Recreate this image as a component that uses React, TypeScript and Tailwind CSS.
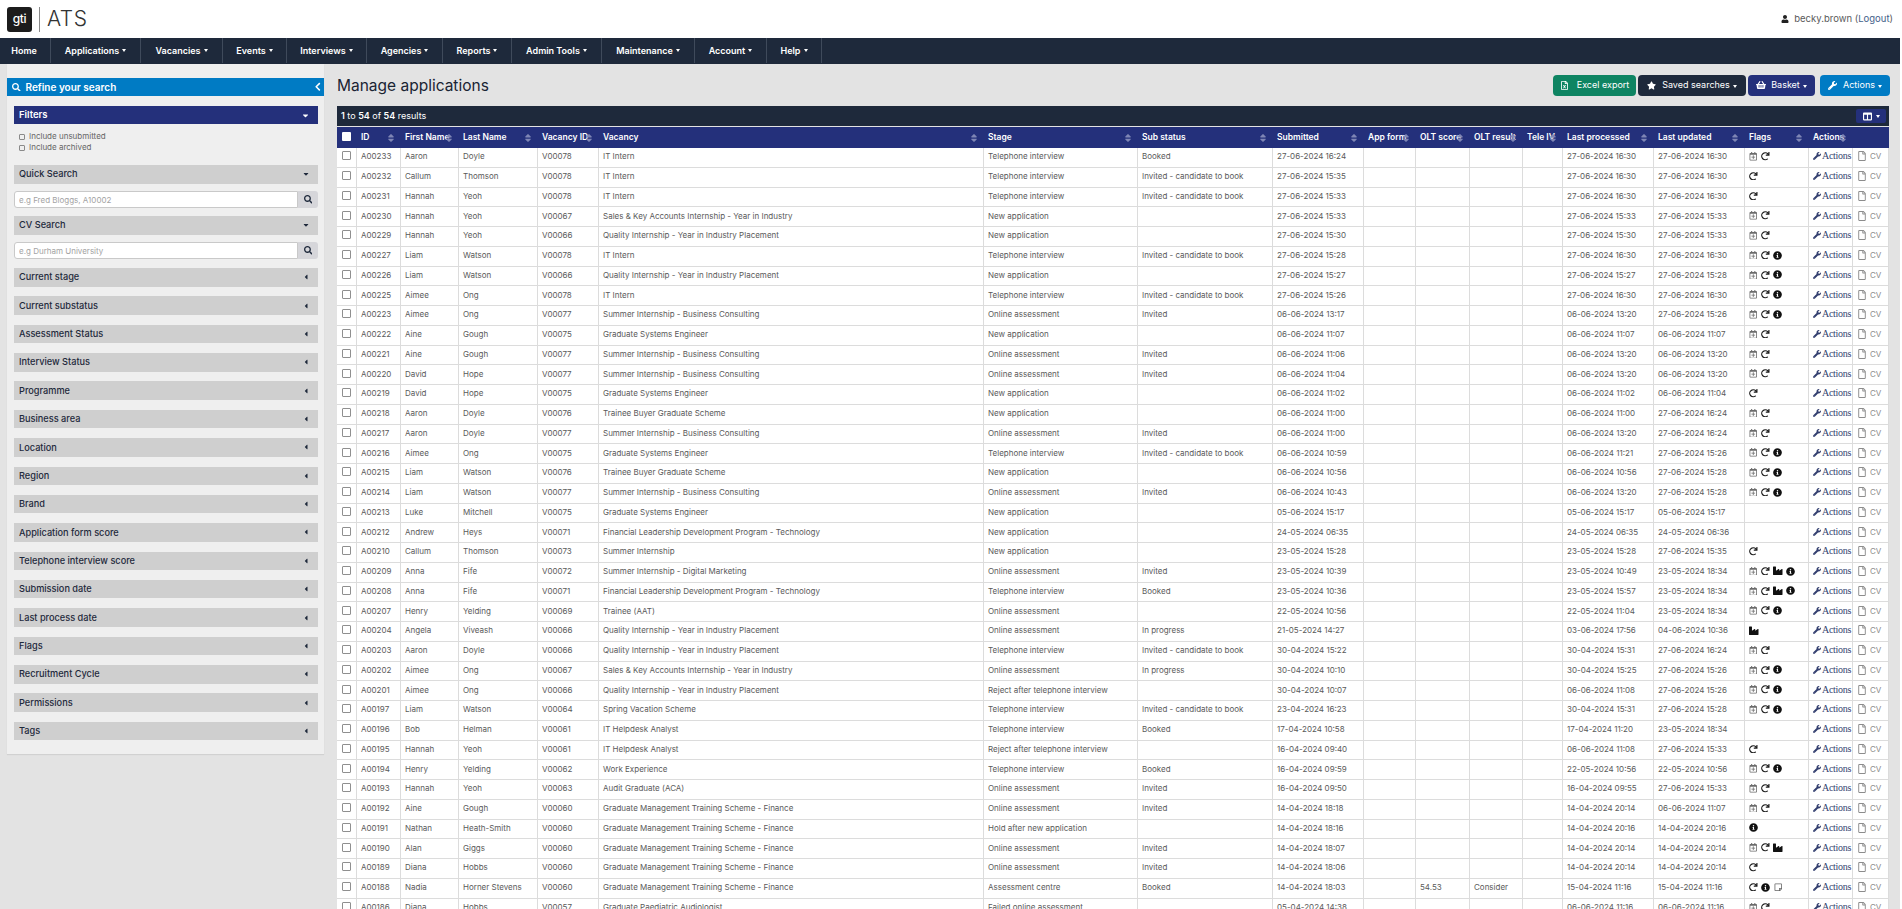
import {
  FaCaretDown,
  FaCaretLeft,
  FaChevronLeft,
  FaColumns,
  FaIndustry,
  FaInfoCircle,
  FaRedo,
  FaRegCalendarPlus,
  FaRegFile,
  FaRegFileExcel,
  FaRegStickyNote,
  FaSearch,
  FaShoppingBasket,
  FaSort,
  FaStar,
  FaUser,
  FaWrench,
} from "react-icons/fa";

const nav = [
  { label: "Home", caret: false, w: "w-[51px] pr-[2px]" },
  { label: "Applications", caret: true, w: "w-[90px]" },
  { label: "Vacancies", caret: true, w: "w-[82px]" },
  { label: "Events", caret: true, w: "w-[64px]" },
  { label: "Interviews", caret: true, w: "w-[80px]" },
  { label: "Agencies", caret: true, w: "w-[76px]" },
  { label: "Reports", caret: true, w: "w-[69px]" },
  { label: "Admin Tools", caret: true, w: "w-[90px]" },
  { label: "Maintenance", caret: true, w: "w-[93px]" },
  { label: "Account", caret: true, w: "w-[72px]" },
  { label: "Help", caret: true, w: "w-[55px]" },
];

const filters = [
  "Current stage",
  "Current substatus",
  "Assessment Status",
  "Interview Status",
  "Programme",
  "Business area",
  "Location",
  "Region",
  "Brand",
  "Application form score",
  "Telephone interview score",
  "Submission date",
  "Last process date",
  "Flags",
  "Recruitment Cycle",
  "Permissions",
  "Tags",
];

const columns = [
  { label: "", w: "w-[20px]", sort: false },
  { label: "ID", w: "w-[44px]", sort: true },
  { label: "First Name", w: "w-[58px]", sort: true },
  { label: "Last Name", w: "w-[79px]", sort: true },
  { label: "Vacancy ID", w: "w-[61px]", sort: true },
  { label: "Vacancy", w: "w-[385px]", sort: true },
  { label: "Stage", w: "w-[154px]", sort: true },
  { label: "Sub status", w: "w-[135px]", sort: true },
  { label: "Submitted", w: "w-[91px]", sort: true },
  { label: "App form", w: "w-[52px]", sort: true },
  { label: "OLT score", w: "w-[54px]", sort: true },
  { label: "OLT result", w: "w-[53px]", sort: true },
  { label: "Tele IV", w: "w-[40px]", sort: true },
  { label: "Last processed", w: "w-[91px]", sort: true },
  { label: "Last updated", w: "w-[91px]", sort: true },
  { label: "Flags", w: "w-[64px]", sort: true },
  { label: "Actions", w: "w-[44px]", sort: true },
  { label: "", w: "w-[36px]", sort: false },
];

const TEL = "Telephone interview";
const NEW = "New application";
const OLA = "Online assessment";
const REJ = "Reject after telephone interview";
const INV = "Invited - candidate to book";
const QUAL = "Quality Internship - Year in Industry Placement";
const SALES = "Sales & Key Accounts Internship - Year in Industry";
const SUMMER = "Summer Internship - Business Consulting";
const GSE = "Graduate Systems Engineer";
const BUYER = "Trainee Buyer Graduate Scheme";
const FIN = "Financial Leadership Development Program - Technology";
const GMT = "Graduate Management Training Scheme - Finance";
const HELP = "IT Helpdesk Analyst";

// id, first, last, vacancy id, vacancy, stage, sub status, submitted, processed, updated, flags
const rows: string[][] = [
  ["A00233", "Aaron", "Doyle", "V00078", "IT Intern", TEL, "Booked", "27-06-2024 16:24", "27-06-2024 16:30", "27-06-2024 16:30", "CR"],
  ["A00232", "Callum", "Thomson", "V00078", "IT Intern", TEL, INV, "27-06-2024 15:35", "27-06-2024 16:30", "27-06-2024 16:30", "R"],
  ["A00231", "Hannah", "Yeoh", "V00078", "IT Intern", TEL, INV, "27-06-2024 15:33", "27-06-2024 16:30", "27-06-2024 16:30", "R"],
  ["A00230", "Hannah", "Yeoh", "V00067", SALES, NEW, "", "27-06-2024 15:33", "27-06-2024 15:33", "27-06-2024 15:33", "CR"],
  ["A00229", "Hannah", "Yeoh", "V00066", QUAL, NEW, "", "27-06-2024 15:30", "27-06-2024 15:30", "27-06-2024 15:33", "CR"],
  ["A00227", "Liam", "Watson", "V00078", "IT Intern", TEL, INV, "27-06-2024 15:28", "27-06-2024 16:30", "27-06-2024 16:30", "CRI"],
  ["A00226", "Liam", "Watson", "V00066", QUAL, NEW, "", "27-06-2024 15:27", "27-06-2024 15:27", "27-06-2024 15:28", "CRI"],
  ["A00225", "Aimee", "Ong", "V00078", "IT Intern", TEL, INV, "27-06-2024 15:26", "27-06-2024 16:30", "27-06-2024 16:30", "CRI"],
  ["A00223", "Aimee", "Ong", "V00077", SUMMER, OLA, "Invited", "06-06-2024 13:17", "06-06-2024 13:20", "27-06-2024 15:26", "CRI"],
  ["A00222", "Aine", "Gough", "V00075", GSE, NEW, "", "06-06-2024 11:07", "06-06-2024 11:07", "06-06-2024 11:07", "CR"],
  ["A00221", "Aine", "Gough", "V00077", SUMMER, OLA, "Invited", "06-06-2024 11:06", "06-06-2024 13:20", "06-06-2024 13:20", "CR"],
  ["A00220", "David", "Hope", "V00077", SUMMER, OLA, "Invited", "06-06-2024 11:04", "06-06-2024 13:20", "06-06-2024 13:20", "CR"],
  ["A00219", "David", "Hope", "V00075", GSE, NEW, "", "06-06-2024 11:02", "06-06-2024 11:02", "06-06-2024 11:04", "R"],
  ["A00218", "Aaron", "Doyle", "V00076", BUYER, NEW, "", "06-06-2024 11:00", "06-06-2024 11:00", "27-06-2024 16:24", "CR"],
  ["A00217", "Aaron", "Doyle", "V00077", SUMMER, OLA, "Invited", "06-06-2024 11:00", "06-06-2024 13:20", "27-06-2024 16:24", "CR"],
  ["A00216", "Aimee", "Ong", "V00075", GSE, TEL, INV, "06-06-2024 10:59", "06-06-2024 11:21", "27-06-2024 15:26", "CRI"],
  ["A00215", "Liam", "Watson", "V00076", BUYER, NEW, "", "06-06-2024 10:56", "06-06-2024 10:56", "27-06-2024 15:28", "CRI"],
  ["A00214", "Liam", "Watson", "V00077", SUMMER, OLA, "Invited", "06-06-2024 10:43", "06-06-2024 13:20", "27-06-2024 15:28", "CRI"],
  ["A00213", "Luke", "Mitchell", "V00075", GSE, NEW, "", "05-06-2024 15:17", "05-06-2024 15:17", "05-06-2024 15:17", ""],
  ["A00212", "Andrew", "Heys", "V00071", FIN, NEW, "", "24-05-2024 06:35", "24-05-2024 06:35", "24-05-2024 06:36", ""],
  ["A00210", "Callum", "Thomson", "V00073", "Summer Internship", NEW, "", "23-05-2024 15:28", "23-05-2024 15:28", "27-06-2024 15:35", "R"],
  ["A00209", "Anna", "Fife", "V00072", "Summer Internship - Digital Marketing", OLA, "Invited", "23-05-2024 10:39", "23-05-2024 10:49", "23-05-2024 18:34", "CRBI"],
  ["A00208", "Anna", "Fife", "V00071", FIN, TEL, "Booked", "23-05-2024 10:36", "23-05-2024 15:57", "23-05-2024 18:34", "CRBI"],
  ["A00207", "Henry", "Yelding", "V00069", "Trainee (AAT)", OLA, "", "22-05-2024 10:56", "22-05-2024 11:04", "23-05-2024 18:34", "CRI"],
  ["A00204", "Angela", "Viveash", "V00066", QUAL, OLA, "In progress", "21-05-2024 14:27", "03-06-2024 17:56", "04-06-2024 10:36", "B"],
  ["A00203", "Aaron", "Doyle", "V00066", QUAL, TEL, INV, "30-04-2024 15:22", "30-04-2024 15:31", "27-06-2024 16:24", "CR"],
  ["A00202", "Aimee", "Ong", "V00067", SALES, OLA, "In progress", "30-04-2024 10:10", "30-04-2024 15:25", "27-06-2024 15:26", "CRI"],
  ["A00201", "Aimee", "Ong", "V00066", QUAL, REJ, "", "30-04-2024 10:07", "06-06-2024 11:08", "27-06-2024 15:26", "CRI"],
  ["A00197", "Liam", "Watson", "V00064", "Spring Vacation Scheme", TEL, INV, "23-04-2024 16:23", "30-04-2024 15:31", "27-06-2024 15:28", "CRI"],
  ["A00196", "Bob", "Helman", "V00061", HELP, TEL, "Booked", "17-04-2024 10:58", "17-04-2024 11:20", "23-05-2024 18:34", ""],
  ["A00195", "Hannah", "Yeoh", "V00061", HELP, REJ, "", "16-04-2024 09:40", "06-06-2024 11:08", "27-06-2024 15:33", "R"],
  ["A00194", "Henry", "Yelding", "V00062", "Work Experience", TEL, "Booked", "16-04-2024 09:59", "22-05-2024 10:56", "22-05-2024 10:56", "CRI"],
  ["A00193", "Hannah", "Yeoh", "V00063", "Audit Graduate (ACA)", OLA, "Invited", "16-04-2024 09:50", "16-04-2024 09:55", "27-06-2024 15:33", "CR"],
  ["A00192", "Aine", "Gough", "V00060", GMT, OLA, "Invited", "14-04-2024 18:18", "14-04-2024 20:14", "06-06-2024 11:07", "CR"],
  ["A00191", "Nathan", "Heath-Smith", "V00060", GMT, "Hold after new application", "", "14-04-2024 18:16", "14-04-2024 20:16", "14-04-2024 20:16", "I"],
  ["A00190", "Alan", "Giggs", "V00060", GMT, OLA, "Invited", "14-04-2024 18:07", "14-04-2024 20:14", "14-04-2024 20:14", "CRB"],
  ["A00189", "Diana", "Hobbs", "V00060", GMT, OLA, "Invited", "14-04-2024 18:06", "14-04-2024 20:14", "14-04-2024 20:14", "R"],
  ["A00188", "Nadia", "Horner Stevens", "V00060", GMT, "Assessment centre", "Booked", "14-04-2024 18:03", "15-04-2024 11:16", "15-04-2024 11:16", "RIN"],
  ["A00186", "Diana", "Hobbs", "V00057", "Graduate Paediatric Audiologist", "Failed online assessment", "", "05-04-2024 14:38", "06-06-2024 11:16", "06-06-2024 11:16", "CR"],
];

const cell = "border-r border-b border-[#dcdcdc] px-[4px] pb-[2px] align-middle whitespace-nowrap overflow-hidden";

function Caret() {
  return <span className="inline-block ml-[3px] border-x-[2.5px] border-t-[3px] border-x-transparent border-t-white" />;
}

function Flag({ code }: { code: string }) {
  if (code === "C") return <FaRegCalendarPlus className="text-[8.5px] text-[#6b6b6b]" />;
  if (code === "R") return <FaRedo className="text-[8.5px] text-[#1a1a1a]" />;
  if (code === "B") return <FaIndustry className="text-[9.5px] text-[#111]" />;
  if (code === "I") return <FaInfoCircle className="text-[9px] text-[#111]" />;
  return <FaRegStickyNote className="text-[8.5px] text-[#666]" />;
}

function FilterBar({ label, open }: { label: string; open?: boolean }) {
  return (
    <div className="h-[18.5px] bg-[#cfcfcf] flex items-center justify-between pl-[5px] pr-[8px] text-[9.2px] font-medium text-[#1e293b]">
      <span>{label}</span>
      {open ? <FaCaretDown className="text-[8px]" /> : <FaCaretLeft className="text-[8px]" />}
    </div>
  );
}

function SearchBox({ placeholder }: { placeholder: string }) {
  return (
    <div className="flex h-[17px]">
      <input
        placeholder={placeholder}
        className="flex-1 min-w-0 bg-white border border-[#c9c9c9] rounded-l-[3px] px-[4px] text-[8px] placeholder:text-[#a3a3a3] outline-none"
      />
      <div className="w-[20px] bg-[#d6d6da] rounded-r-[3px] flex items-center justify-center">
        <FaSearch className="text-[8.5px] text-[#1e293b]" />
      </div>
    </div>
  );
}

function Sidebar() {
  return (
    <aside className="ml-[7px] w-[317px] h-[690px] shrink-0 bg-[#efefef] shadow-[0_1px_1px_rgba(0,0,0,0.08)] pt-[14px]">
      <div className="h-[18px] bg-[#007bc4] text-white flex items-center justify-between pl-[5px] pr-[2px] text-[10px] font-semibold">
        <span className="flex items-center gap-[5px]">
          <FaSearch className="text-[8.5px]" />
          Refine your search
        </span>
        <FaChevronLeft className="text-[9.5px]" />
      </div>
      <div className="pl-[7px] pr-[6px] mt-[10px]">
        <div className="h-[18px] bg-[#24307b] text-white flex items-center justify-between pl-[5px] pr-[8px] text-[9.5px] font-semibold">
          <span>Filters</span>
          <FaCaretDown className="text-[9px]" />
        </div>
        <div className="mt-[8px] ml-[5px] flex flex-col gap-[1.5px] text-[8px] text-[#666] leading-[9.5px]">
          <label className="flex items-center gap-[4px]">
            <span className="w-[6px] h-[6px] border border-[#8a8a8a] rounded-[1px]" />
            Include unsubmitted
          </label>
          <label className="flex items-center gap-[4px]">
            <span className="w-[6px] h-[6px] border border-[#8a8a8a] rounded-[1px]" />
            Include archived
          </label>
        </div>
        <div className="mt-[12.5px]">
          <FilterBar label="Quick Search" open />
        </div>
        <div className="mt-[7.5px]">
          <SearchBox placeholder="e.g Fred Bloggs, A10002" />
        </div>
        <div className="mt-[8px]">
          <FilterBar label="CV Search" open />
        </div>
        <div className="mt-[7.5px]">
          <SearchBox placeholder="e.g Durham University" />
        </div>
        <div className="mt-[9px] flex flex-col gap-[9.86px]">
          {filters.map((f) => (
            <FilterBar key={f} label={f} />
          ))}
        </div>
      </div>
    </aside>
  );
}

function ResultsTable() {
  return (
    <div>
      <div className="h-[20px] bg-[#1e293b] text-white flex items-center justify-between pl-[4px] pr-[3px] text-[9px]">
        <span>
          <b className="font-semibold">1</b> to <b className="font-semibold">54</b> of <b className="font-semibold">54</b> results
        </span>
        <span className="w-[30px] h-[14px] bg-[#24307b] rounded-[2px] flex items-center justify-center gap-[4px]">
          <FaColumns className="text-[9px]" />
          <span className="border-x-[2.5px] border-t-[3px] border-x-transparent border-t-white" />
        </span>
      </div>
      <table className="table-fixed border-separate border-spacing-0 w-[1552px] mt-[1px] bg-white text-[8px] text-[#5a5a5a]">
        <colgroup>
          {columns.map((c, i) => (
            <col key={i} className={c.w} />
          ))}
        </colgroup>
        <thead>
          <tr className="h-[21px] bg-[#24307b] text-white">
            {columns.map((c, i) => (
              <th key={i} className="relative px-[4px] text-left font-semibold text-[8.5px] whitespace-nowrap overflow-hidden">
                {i === 0 ? (
                  <input type="checkbox" className="block appearance-none w-[9px] h-[9px] ml-px bg-white rounded-[1px] -mt-[2px]" />
                ) : (
                  c.label
                )}
                {c.sort && <FaSort className="absolute right-[5px] top-[5.5px] text-[10px] text-[#7f86b5]" />}
              </th>
            ))}
          </tr>
        </thead>
        <tbody>
          {rows.map((r) => (
            <tr key={r[0]} className="h-[19.75px]">
              <td className={cell}>
                <input type="checkbox" className="block appearance-none w-[9px] h-[9px] ml-px -mt-[1px] bg-white border border-[#8f8f8f] rounded-[1px]" />
              </td>
              <td className={cell}>{r[0]}</td>
              <td className={cell}>{r[1]}</td>
              <td className={cell}>{r[2]}</td>
              <td className={cell}>{r[3]}</td>
              <td className={cell}>{r[4]}</td>
              <td className={cell}>{r[5]}</td>
              <td className={cell}>{r[6]}</td>
              <td className={cell}>{r[7]}</td>
              <td className={cell}></td>
              <td className={cell}>{r[0] === "A00188" ? "54.53" : ""}</td>
              <td className={cell}>{r[0] === "A00188" ? "Consider" : ""}</td>
              <td className={cell}></td>
              <td className={cell}>{r[8]}</td>
              <td className={cell}>{r[9]}</td>
              <td className={cell}>
                <span className="flex items-center gap-[3.5px]">
                  {r[10].split("").map((code, i) => (
                    <Flag key={i} code={code} />
                  ))}
                </span>
              </td>
              <td className={cell}>
                <span className="flex items-center text-[#333f6f] font-['Liberation_Serif',serif] text-[10px] tracking-[-0.3px] leading-none">
                  <FaWrench className="text-[8px] mr-px shrink-0" />
                  Actions
                </span>
              </td>
              <td className={cell}>
                <span className="flex items-center gap-[3px] text-[#8c8c8c]">
                  <FaRegFile className="text-[10px] shrink-0" />
                  CV
                </span>
              </td>
            </tr>
          ))}
        </tbody>
      </table>
    </div>
  );
}

export default function App() {
  return (
    <div className="w-[1900px] h-[909px] overflow-hidden bg-[#e3e3e3] font-['Inter',sans-serif]">
      <header className="h-[38px] bg-white flex items-center justify-between pl-[7px] pr-[7px]">
        <div className="flex items-center">
          <div className="w-[25px] h-[25px] bg-[#1c1c1c] rounded-[3px] flex items-center justify-center text-white text-[12px] font-medium tracking-tight">
            gti
          </div>
          <div className="w-px h-[25px] bg-[#8a8a8a] ml-[7px]" />
          <div className="ml-[7px] text-[21px] font-light text-[#333] tracking-[0.5px]">ATS</div>
        </div>
        <div className="flex items-center gap-[5px] text-[9.5px] text-[#5a5a5a]">
          <FaUser className="text-[8px] text-[#222]" />
          <span>
            becky.brown (<span className="text-[#44618a]">Logout</span>)
          </span>
        </div>
      </header>

      <nav className="h-[26px] bg-[#1e293b] flex">
        {nav.map((item) => (
          <div
            key={item.label}
            className={`${item.w} h-[25px] border-r border-[#3f4a5b] flex items-center justify-center text-white text-[9px] font-semibold`}
          >
            {item.label}
            {item.caret && <Caret />}
          </div>
        ))}
      </nav>

      <div className="flex items-start">
        <Sidebar />
        <main className="flex-1 min-w-0 pl-[13px] pr-[11px]">
          <div className="h-[42px] flex items-center justify-between">
            <h1 className="text-[15.5px] text-[#1a2433] font-normal pt-[1px]">Manage applications</h1>
            <div className="flex items-center text-white text-[9px] -mr-[1px]">
              <button className="h-[21px] w-[83px] bg-[#0e8462] rounded-[4px] flex items-center justify-center gap-[8px]">
                <FaRegFileExcel className="text-[9px]" />
                Excel export
              </button>
              <button className="h-[21px] w-[108px] ml-[2px] bg-[#1e293b] rounded-[4px] flex items-center justify-center gap-[6px]">
                <FaStar className="text-[9px]" />
                <span>
                  Saved searches
                  <Caret />
                </span>
              </button>
              <button className="h-[21px] w-[67px] ml-[2px] bg-[#24307b] rounded-[4px] flex items-center justify-center gap-[5px]">
                <FaShoppingBasket className="text-[10px]" />
                <span>
                  Basket
                  <Caret />
                </span>
              </button>
              <button className="h-[21px] w-[70px] ml-[5px] bg-[#007bc4] rounded-[4px] flex items-center justify-center gap-[6px]">
                <FaWrench className="text-[9px]" />
                <span>
                  Actions
                  <Caret />
                </span>
              </button>
            </div>
          </div>
          <ResultsTable />
        </main>
      </div>
    </div>
  );
}
